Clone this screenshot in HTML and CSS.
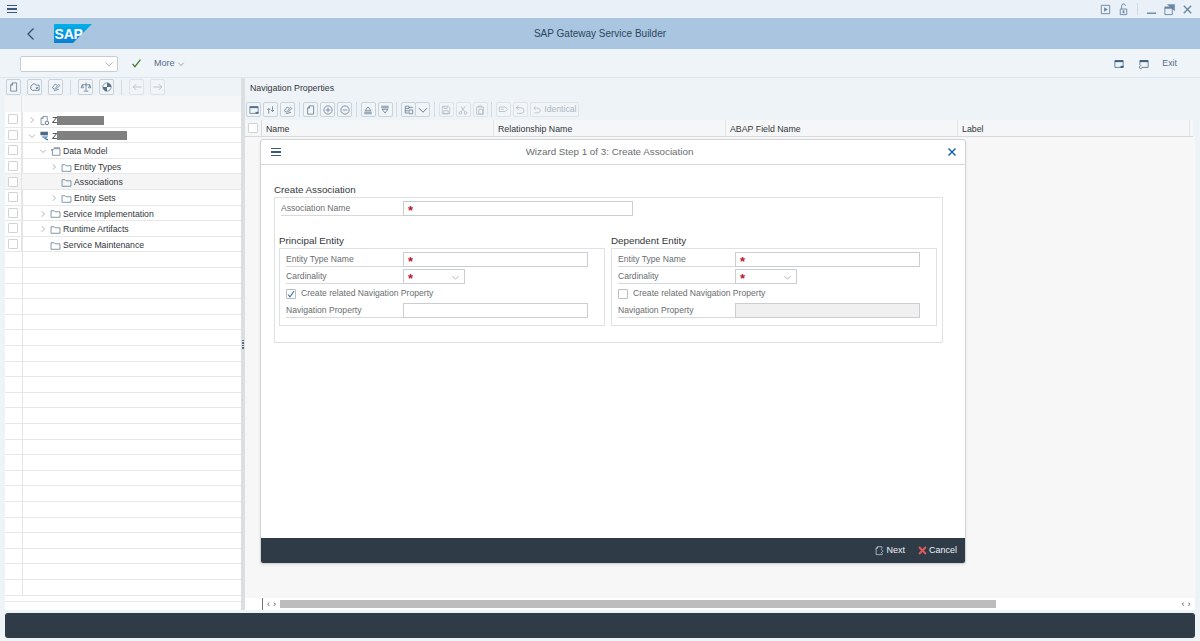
FILE: index.html
```html
<!DOCTYPE html>
<html lang="en">
<head>
<meta charset="utf-8">
<title>SAP Gateway Service Builder</title>
<link rel="stylesheet" href="styles.css">
</head>
<body>
<svg class="defs" aria-hidden="true">
  <symbol id="doc" viewBox="0 0 16 16"><path d="M6 2.500h5.500v11h-8V5.500z M6 2.500v3H3.500" fill="none" stroke="currentColor"/></symbol>
  <symbol id="open" viewBox="0 0 16 16"><path d="M2.500 6.500l4-3 3 2h4v7h-9l-2-2zM9 8l3 3M12 8l-3 3" fill="none" stroke="currentColor"/></symbol>
  <symbol id="link" viewBox="0 0 16 16"><path d="M3 9l4-5 3 2-4 5zM8 11l5-5-2-2M5 13l7-2" fill="none" stroke="currentColor"/></symbol>
  <symbol id="scale" viewBox="0 0 16 16"><path d="M8 2v11M5 13.500h6M3 5h10M3 5l-1.500 4h3zM13 5l-1.500 4h3z" fill="none" stroke="currentColor"/></symbol>
  <symbol id="globe" viewBox="0 0 16 16"><circle cx="8" cy="8" r="5.500" fill="#fff" stroke="currentColor"/><path d="M8 2.500a5.500 5.500 0 0 1 5.500 5.500H8zM8 8h-5.500a5.500 5.500 0 0 0 5.500 5.500z" fill="currentColor"/></symbol>
  <symbol id="left" viewBox="0 0 16 16"><path d="M14 8H3M7 4L3 8l4 4" fill="none" stroke="currentColor"/></symbol>
  <symbol id="right" viewBox="0 0 16 16"><path d="M2 8h11M9 4l4 4-4 4" fill="none" stroke="currentColor"/></symbol>
  <symbol id="win" viewBox="0 0 16 16"><path d="M2.500 3.500h11v9h-11z" fill="none" stroke="currentColor"/><path d="M2.500 3h11v2.500h-11z" fill="currentColor"/><path d="M10 10.500h4v2.500h-4z" fill="currentColor"/></symbol>
  <symbol id="win2" viewBox="0 0 16 16"><path d="M5 12.500h8.500v-9h-11v6" fill="none" stroke="currentColor"/><path d="M2.500 3h11v2.500h-11z" fill="currentColor"/><path d="M4.500 10.500a2 2 0 1 0 1 3" fill="none" stroke="currentColor"/></symbol>
  <symbol id="swap" viewBox="0 0 16 16"><path d="M5 13V6M3 8l2-2 2 2M10 3v7M8 8l2 2 2-2" fill="none" stroke="currentColor"/></symbol>
  <symbol id="plus" viewBox="0 0 16 16"><circle cx="8" cy="8" r="5.500" fill="none" stroke="currentColor"/><path d="M5 8h6M8 5v6" stroke="currentColor"/></symbol>
  <symbol id="minus" viewBox="0 0 16 16"><circle cx="8" cy="8" r="5.500" fill="none" stroke="currentColor"/><path d="M5 8h6" stroke="currentColor"/></symbol>
  <symbol id="up" viewBox="0 0 16 16"><path d="M8 4l4 5H4zM3 11h10M3 13h10" fill="none" stroke="currentColor"/></symbol>
  <symbol id="down" viewBox="0 0 16 16"><path d="M3 3h10M3 5h10M8 12L4 7h8z" fill="none" stroke="currentColor"/></symbol>
  <symbol id="grid" viewBox="0 0 16 16"><path d="M3 3h5v3H3zM3 6v6h4M3 9h4M8 8h5v5H8zM8 4.500h5" fill="none" stroke="currentColor"/></symbol>
  <symbol id="copy" viewBox="0 0 16 16"><path d="M3 3h8l2 2v8H3zM5.500 3v3h4V3M5 9h6v4H5z" fill="none" stroke="currentColor"/></symbol>
  <symbol id="cut" viewBox="0 0 16 16"><circle cx="4.500" cy="12" r="1.800" fill="none" stroke="currentColor"/><circle cx="11.500" cy="12" r="1.800" fill="none" stroke="currentColor"/><path d="M5.500 10.500L11 3M10.500 10.500L5 3" fill="none" stroke="currentColor"/></symbol>
  <symbol id="paste" viewBox="0 0 16 16"><path d="M3.500 4h9v9.500h-9zM6 4V2.500h4V4M6.500 7h5v6.500h-5z" fill="none" stroke="currentColor"/></symbol>
  <symbol id="flag" viewBox="0 0 16 16"><path d="M3 4h8l3 3-3 3H3zM5 7h4" fill="none" stroke="currentColor"/></symbol>
  <symbol id="undo" viewBox="0 0 16 16"><path d="M6 2.500L3 5l3 2.500M3 5h6.500a3.500 3.500 0 0 1 0 7.500H4" fill="none" stroke="currentColor"/></symbol>
  <symbol id="folder" viewBox="0 0 16 16"><path d="M1.500 4h4.500l1.500 1.500h7v8h-13z" fill="none" stroke="currentColor"/></symbol>
  <symbol id="chev-r" viewBox="0 0 16 16"><path d="M5.500 2.500L11 8l-5.500 5.500" fill="none" stroke="currentColor" stroke-width="1.200"/></symbol>
  <symbol id="chev-d" viewBox="0 0 16 16"><path d="M2.500 5.500L8 11l5.500-5.500" fill="none" stroke="currentColor" stroke-width="1.200"/></symbol>
  <symbol id="model" viewBox="0 0 16 16"><path d="M1.500 5.500h3l1-1.500h9v9.500h-11V6z M5.500 2.500h9" fill="none" stroke="currentColor"/></symbol>
  <symbol id="svcdoc" viewBox="0 0 16 16"><path d="M3 14V5l3-3h6v6M6 2v3H3M3 14h5" fill="none" stroke="currentColor"/><circle cx="11.500" cy="11.500" r="2.600" fill="none" stroke="currentColor" stroke-width="1.300"/></symbol>
  <symbol id="svcstack" viewBox="0 0 16 16"><path d="M2 2.500h11v5H2z" fill="currentColor"/><path d="M4 9h9M5 11h7" stroke="currentColor"/><path d="M8 12l5 2.500" stroke="#2b7cc4" stroke-width="2"/></symbol>
</svg>

<div class="titlebar">
  <div class="menu-icon"><span></span><span></span><span></span></div>
  <div class="win-tools">
    <svg class="wi" viewBox="0 0 14 14"><path d="M2.500 2.500h9v9h-9z" fill="none" stroke="currentColor"/><path d="M5.500 4.500l4 2.500-4 2.500z" fill="currentColor"/></svg>
    <svg class="wi" viewBox="0 0 14 14"><path d="M3.500 6.500h7v6h-7zM5 6.500V3a2 2 0 0 1 4 0" fill="none" stroke="currentColor"/><path d="M6 8h2v3H6z" fill="currentColor"/></svg>
    <i class="win-sep"></i>
    <svg class="wi" viewBox="0 0 14 14"><path d="M2 11h10" stroke="currentColor" stroke-width="1.500"/></svg>
    <svg class="wi" viewBox="0 0 14 14"><path d="M2 5h8v7.500H2z" fill="none" stroke="currentColor"/><path d="M2 4h8v2H2zM4.500 1.500h8v7" fill="currentColor" stroke="currentColor" stroke-width=".4"/></svg>
    <svg class="wi" viewBox="0 0 14 14"><path d="M3 3l8 8M11 3l-8 8" stroke="currentColor" stroke-width="1.500"/></svg>
  </div>
</div>

<header class="shell">
  <svg class="back" viewBox="0 0 12 14"><path d="M8.500 1.500L3 7l5.500 5.500" fill="none" stroke="currentColor" stroke-width="1.300"/></svg>
  <svg class="logo" viewBox="0 0 38 19"><defs><linearGradient id="sapg" x1="0" y1="0" x2="0" y2="1"><stop offset="0" stop-color="#00b1eb"/><stop offset="1" stop-color="#0a7fd0"/></linearGradient></defs><path d="M0 0h38L19 19H0z" fill="url(#sapg)"/><text x=".5" y="14.500" class="logo-text">SAP</text></svg>
  <div class="shell-title">SAP Gateway Service Builder</div>
</header>

<div class="apptools">
  <div class="cmd"><svg class="ic-chev" viewBox="0 0 16 16"><use href="#chev-d"/></svg></div>
  <svg class="check" viewBox="0 0 14 14"><path d="M2 7.500l3 3.500 7-9" fill="none" stroke="currentColor" stroke-width="1.600"/></svg>
  <span class="more">More</span>
  <svg class="more-chev" viewBox="0 0 16 16"><use href="#chev-d"/></svg>
  <div class="spacer"></div>
  <svg class="ico15" viewBox="0 0 16 16"><use href="#win"/></svg>
  <svg class="ico15" viewBox="0 0 16 16"><use href="#win2"/></svg>
  <span class="exit">Exit</span>
</div>

<main class="main">
  <section class="tree-pane">
    <div class="toolbar tree-tools">
      <button class="tb"><svg><use href="#doc"/></svg></button>
      <button class="tb"><svg><use href="#open"/></svg></button>
      <button class="tb"><svg><use href="#link"/></svg></button>
      <i class="sep"></i>
      <button class="tb"><svg><use href="#scale"/></svg></button>
      <button class="tb"><svg><use href="#globe"/></svg></button>
      <i class="sep"></i>
      <button class="tb off"><svg><use href="#left"/></svg></button>
      <button class="tb off"><svg><use href="#right"/></svg></button>
    </div>
    <div class="tree-head"><div class="sel-col"></div></div>
    <div class="tree">
      <div class="row"><div class="sel-col"><i class="cb"></i></div><div class="cell lv0"><svg class="chev"><use href="#chev-r"/></svg><svg class="fi"><use href="#svcdoc"/></svg><span class="z">Z</span><i class="redact r1"></i></div></div>
      <div class="row"><div class="sel-col"><i class="cb"></i></div><div class="cell lv0"><svg class="chev"><use href="#chev-d"/></svg><svg class="fi"><use href="#svcstack"/></svg><span class="z">Z</span><i class="redact r2"></i></div></div>
      <div class="row"><div class="sel-col"><i class="cb"></i></div><div class="cell lv1"><svg class="chev"><use href="#chev-d"/></svg><svg class="fi"><use href="#model"/></svg><span>Data Model</span></div></div>
      <div class="row"><div class="sel-col"><i class="cb"></i></div><div class="cell lv2"><svg class="chev"><use href="#chev-r"/></svg><svg class="fi"><use href="#folder"/></svg><span>Entity Types</span></div></div>
      <div class="row active"><div class="sel-col"><i class="cb"></i></div><div class="cell lv2"><i class="chev"></i><svg class="fi"><use href="#folder"/></svg><span>Associations</span></div></div>
      <div class="row"><div class="sel-col"><i class="cb"></i></div><div class="cell lv2"><svg class="chev"><use href="#chev-r"/></svg><svg class="fi"><use href="#folder"/></svg><span>Entity Sets</span></div></div>
      <div class="row"><div class="sel-col"><i class="cb"></i></div><div class="cell lv1"><svg class="chev"><use href="#chev-r"/></svg><svg class="fi"><use href="#folder"/></svg><span>Service Implementation</span></div></div>
      <div class="row"><div class="sel-col"><i class="cb"></i></div><div class="cell lv1"><svg class="chev"><use href="#chev-r"/></svg><svg class="fi"><use href="#folder"/></svg><span>Runtime Artifacts</span></div></div>
      <div class="row"><div class="sel-col"><i class="cb"></i></div><div class="cell lv1"><i class="chev"></i><svg class="fi"><use href="#folder"/></svg><span>Service Maintenance</span></div></div>
    </div>
    <div class="tree-foot"></div>
  </section>

  <div class="splitter"><span></span><span></span><span></span><span></span></div>

  <section class="detail">
    <div class="detail-title">Navigation Properties</div>
    <div class="toolbar detail-tools">
      <button class="tb"><svg><use href="#win"/></svg></button>
      <button class="tb"><svg><use href="#swap"/></svg></button>
      <button class="tb"><svg><use href="#link"/></svg></button>
      <i class="sep"></i>
      <button class="tb"><svg><use href="#doc"/></svg></button>
      <button class="tb"><svg><use href="#plus"/></svg></button>
      <button class="tb"><svg><use href="#minus"/></svg></button>
      <i class="sep"></i>
      <button class="tb"><svg><use href="#up"/></svg></button>
      <button class="tb"><svg><use href="#down"/></svg></button>
      <i class="sep"></i>
      <div class="split"><button class="tb"><svg><use href="#grid"/></svg></button><button class="tb"><svg><use href="#chev-d"/></svg></button></div>
      <i class="sep"></i>
      <button class="tb off"><svg><use href="#copy"/></svg></button>
      <button class="tb off"><svg><use href="#cut"/></svg></button>
      <button class="tb off"><svg><use href="#paste"/></svg></button>
      <i class="sep"></i>
      <button class="tb off"><svg><use href="#flag"/></svg></button>
      <button class="tb off"><svg><use href="#undo"/></svg></button>
      <button class="tb off wide"><svg><use href="#undo"/></svg>Identical</button>
    </div>
    <div class="thead">
      <div class="th-sel"><i class="cb"></i></div>
      <div class="th">Name</div>
      <div class="th">Relationship Name</div>
      <div class="th">ABAP Field Name</div>
      <div class="th">Label</div>
    </div>
    <div class="grid-body"></div>
    <div class="hscroll">
      <div class="arrows"><span>‹</span><span>›</span></div>
      <div class="track"><div class="thumb"></div></div>
      <div class="arrows end"><span>‹</span><span>›</span></div>
    </div>

    <div class="dialog" role="dialog">
      <div class="dlg-head">
        <div class="menu-icon small"><span></span><span></span><span></span></div>
        <div class="dlg-title">Wizard Step 1 of 3: Create Association</div>
        <svg class="dlg-close" viewBox="0 0 10 10"><path d="M1.500 1.500l7 7M8.500 1.500l-7 7" stroke="currentColor" stroke-width="1.400"/></svg>
      </div>
      <div class="dlg-body">
        <h3 class="group-title">Create Association</h3>
        <div class="group">
          <div class="frow top"><label>Association Name</label><div class="inp w230"><b>*</b></div></div>
          <div class="cols">
            <div class="col">
              <h3 class="group-title">Principal Entity</h3>
              <div class="subgroup">
                <div class="frow"><label>Entity Type Name</label><div class="inp w185"><b>*</b></div></div>
                <div class="frow"><label>Cardinality</label><div class="inp w62"><b>*</b><svg viewBox="0 0 16 16"><use href="#chev-d"/></svg></div></div>
                <div class="crow"><i class="cb checked"><svg viewBox="0 0 10 10"><path d="M2 5.500l2 2.300L8 2" fill="none" stroke="currentColor" stroke-width="1.100"/></svg></i><span>Create related Navigation Property</span></div>
                <div class="frow"><label>Navigation Property</label><div class="inp w185"></div></div>
              </div>
            </div>
            <div class="col">
              <h3 class="group-title">Dependent Entity</h3>
              <div class="subgroup">
                <div class="frow"><label>Entity Type Name</label><div class="inp w185"><b>*</b></div></div>
                <div class="frow"><label>Cardinality</label><div class="inp w62"><b>*</b><svg viewBox="0 0 16 16"><use href="#chev-d"/></svg></div></div>
                <div class="crow"><i class="cb"></i><span>Create related Navigation Property</span></div>
                <div class="frow"><label>Navigation Property</label><div class="inp w185 disabled"></div></div>
              </div>
            </div>
          </div>
        </div>
      </div>
      <div class="dlg-foot">
        <svg class="foot-ic" viewBox="0 0 16 16"><path d="M5 2.500h6.500v3M3 5l2-2.500V5zM3 5v9h9v-2M10 6l3 3-3 3" fill="none" stroke="currentColor"/></svg><span>Next</span>
        <svg class="foot-ic cancel" viewBox="0 0 16 16"><path d="M3 3l10 10M13 3L3 13" stroke="currentColor" stroke-width="3"/></svg><span>Cancel</span>
      </div>
    </div>
  </section>
</main>

<footer class="status"></footer>
</body>
</html>
```
FILE: styles.css
```css
* { box-sizing: border-box; }
html, body { margin: 0; height: 641px; overflow: hidden; }
body {
  display: flex; flex-direction: column;
  width: 1200px;
  background: #eef3f8;
  color: #32363a;
  font: 8.6px/1 "Liberation Sans", Arial, sans-serif;
}
.defs { display: none; }

/* title bar */
.titlebar { height: 18px; display: flex; align-items: center; justify-content: space-between; background: #e9f0f7; padding: 0 6px 0 7px; }
.menu-icon { display: flex; flex-direction: column; gap: 2px; width: 10px; }
.menu-icon span { height: 1.400px; background: #3b5a7a; }
.menu-icon.small { width: 10px; }
.win-tools { display: flex; align-items: center; gap: 5px; color: #6a87a3; }
.wi { width: 13px; height: 13px; }
.win-sep { width: 1px; height: 12px; background: #cfdbe6; margin: 0 2px; }

/* shell header */
.shell { position: relative; height: 31px; display: flex; align-items: center; background: #a9c5df; padding-left: 25px; }
.back { width: 12px; height: 14px; color: #34506c; }
.logo { width: 38px; height: 19px; margin-left: 17px; }
.logo-text { font: bold 14px "Liberation Sans", Arial, sans-serif; fill: #fff; letter-spacing: -.2px; }
.shell-title { position: absolute; left: 0; right: 0; text-align: center; font-size: 10px; color: #2c4560; }

/* app toolbar */
.apptools { height: 29px; display: flex; align-items: center; background: #eff4f9; padding: 1px 23px 0 20px; border-bottom: 1px solid #dfe6ed; color: #51708e; }
.cmd { width: 98px; height: 16px; background: #fff; border: 1px solid #c5ced6; border-radius: 2px; display: flex; align-items: center; justify-content: flex-end; padding-right: 3px; }
.ic-chev { width: 10px; height: 10px; color: #8a96a1; }
.check { width: 11px; height: 11px; color: #3c7a2d; margin-left: 13px; }
.more { margin-left: 12px; font-size: 9px; color: #556e88; }
.more-chev { width: 8px; height: 8px; margin-left: 2px; color: #556e88; }
.spacer { flex: 1; }
.ico15 { width: 12px; height: 12px; margin-left: 13px; color: #3f5d7c; }
.exit { margin-left: 12px; font-size: 8.800px; color: #556e88; }

/* shared toolbar */
.toolbar { display: flex; align-items: center; gap: 2px; }
.tb { width: 15px; height: 15.500px; padding: 0; display: inline-flex; align-items: center; justify-content: center; gap: 2px; background: #f2f5f8; border: 1px solid #c8d2db; border-radius: 2px; color: #56718c; font: inherit; }
.tb svg { width: 12px; height: 12px; flex: none; }
.tb.off { color: #a9b6c2; border-color: #dde3e9; }
.tb.wide { width: 49px; color: #a9b6c2; }
.tb.wide svg { width: 10px; height: 10px; }
.sep { width: 1px; height: 15px; background: #d3dbe2; margin: 0 3px; }
.split { display: flex; }
.split .tb + .tb { margin-left: -1px; }

/* main area */
.main { flex: 0 0 532px; height: 532px; display: flex; padding-left: 5px; }
.tree-pane { width: 236px; display: flex; flex-direction: column; background: #fff; }
.tree-tools { height: 18px; gap: 6px; padding-left: 1px; background: #eef3f8; }
.tree-tools .sep { margin: 0 1px; }
.tree-head { height: 16px; background: #f5f6f7; display: flex; }
.sel-col { width: 17px; flex: none; border-right: 1px solid #e5e5e5; display: flex; align-items: center; justify-content: center; height: 100%; }
.tree {
  flex: 1; overflow: hidden;
  background-image: linear-gradient(to right, transparent 17px, #e5e5e5 17px, #e5e5e5 18px, transparent 18px), repeating-linear-gradient(to bottom, #fff 0, #fff 14.600px, #e8e8e8 14.600px, #e8e8e8 15.600px);
}
.tree-foot { flex: none; height: 14px; background: linear-gradient(to bottom, #fff 5px, #e8e8e8 5px, #e8e8e8 6px, #fff 6px); }
.row { height: 15.600px; display: flex; align-items: center; border-bottom: 1px solid #e8e8e8; }
.row.active { background: #f5f5f5; }
.cell { display: flex; align-items: center; color: #32363a; font-size: 8.700px; padding-top: 2px; }
.lv0 { padding-left: 6px; }
.lv1 { padding-left: 17px; }
.lv2 { padding-left: 28px; }
.chev { width: 8px; height: 8px; color: #6a7f93; display: block; margin-right: 3px; flex: none; }
.fi { width: 11px; height: 11px; color: #4d6a86; margin-right: 2px; flex: none; }
.redact { height: 9px; background: #808080; display: block; }
.r1 { width: 47px; }
.r2 { width: 70px; }
.cb { display: block; position: relative; width: 10px; height: 10px; background: #fff; border: 1px solid #cfd4d9; border-radius: 1px; flex: none; }

.splitter { width: 4px; background: #dcdfe2; display: flex; flex-direction: column; align-items: center; justify-content: center; gap: 1px; }
.splitter span { width: 1.500px; height: 1.500px; background: #5b6f82; }

/* detail */
.detail { position: relative; width: 950px; display: flex; flex-direction: column; }
.detail-title { height: 21px; padding: 6px 0 0 5px; font-size: 8.800px; color: #32363a; }
.detail-tools { height: 21px; padding-left: 1px; gap: 2px; }
.detail-tools .sep { margin: 0 1.700px; }
.thead { height: 17px; display: grid; grid-template-columns: 17px 232px 232px 232px 232px; background: #f5f6f7; border-bottom: 1px solid #d9d9d9; margin-right: 2px; }
.th-sel { display: flex; align-items: center; justify-content: center; border-right: 1px solid #d9d9d9; }
.th { padding: 5px 0 0 4px; font-size: 8.800px; border-right: 1px solid #e5e5e5; }
.grid-body { flex: 1; background: #f7f7f7; }
.hscroll { height: 12px; background: #fff; display: flex; align-items: center; padding-left: 17px; }
.arrows { width: 18px; display: flex; justify-content: center; gap: 3px; color: #555; font-size: 9px; border-left: 1px solid #777; height: 100%; align-items: center; }
.arrows.end { border: 0; }
.track { flex: 1; height: 8px; }
.thumb { width: 716px; height: 100%; background: #bdbdbd; }

/* dialog */
.dialog { position: absolute; left: 15px; top: 61px; width: 706px; height: 425px; background: #fff; border: 1px solid #d0d4d8; border-radius: 3px; display: flex; flex-direction: column; box-shadow: 0 1px 3px rgba(0,0,0,.08); }
.dlg-head { position: relative; height: 25px; flex: none; display: flex; align-items: center; justify-content: space-between; padding: 0 8px 0 10px; border-bottom: 1px solid #d9d9d9; }
.dlg-title { position: absolute; left: 0; right: 7px; text-align: center; font-size: 9.800px; color: #6a6d70; }
.dlg-close { width: 10px; height: 10px; color: #0a5ea8; }
.dlg-body { flex: 1; padding: 20px 22px 0 13px; }
.group-title { margin: 0; height: 11px; font-weight: 400; font-size: 9.800px; color: #32363a; }
.group { margin-top: 1px; height: 146px; padding: 2px 5px 0 6px; border: 1px solid #dfe2e5; }
.frow { display: flex; align-items: center; height: 17px; }
.frow label { width: 117px; height: 15px; padding: 3px 0 0 0; font-size: 8.600px; color: #6a6d70; border-bottom: 1px solid #d9d9d9; flex: none; }
.frow.top label { width: 122px; }
.inp { position: relative; height: 15.500px; background: #fff; border: 1px solid #c9ced3; padding-left: 4px; display: flex; align-items: center; }
.inp b { color: #b3202f; font-size: 13px; line-height: 1; padding-top: 4px; font-weight: 700; }
.inp svg { position: absolute; right: 4px; top: 3px; width: 9px; height: 9px; color: #8a96a1; }
.w230 { width: 230px; }
.w185 { width: 185px; }
.w62 { width: 62px; }
.disabled { background: #f0f0f0; }
.cols { display: grid; grid-template-columns: 326px 326px; column-gap: 6px; margin-top: 19px; margin-left: -2px; }
.subgroup { margin-top: 1px; height: 78px; padding: 2px 0 0 6px; border: 1px solid #dfe2e5; }
.crow { display: flex; align-items: center; height: 17px; font-size: 8.600px; color: #6a6d70; gap: 5px; }
.crow .cb { border-color: #b7bec5; }
.checked svg { position: absolute; left: -1px; top: -1px; width: 10px; height: 10px; color: #3f6fa3; }

.dlg-foot { height: 25px; flex: none; display: flex; align-items: center; justify-content: flex-end; background: #2f3c48; border-radius: 0 0 2px 2px; color: #eef2f6; font-size: 9px; padding-right: 8px; }
.foot-ic { width: 11px; height: 11px; margin-right: 1px; color: #d8dee4; }
.foot-ic.cancel { margin-left: 12px; color: #e05a5a; }

/* bottom bar */
.status { height: 25px; margin: 3px 5px 0; background: #2f3c48; border-radius: 3px; }
```
